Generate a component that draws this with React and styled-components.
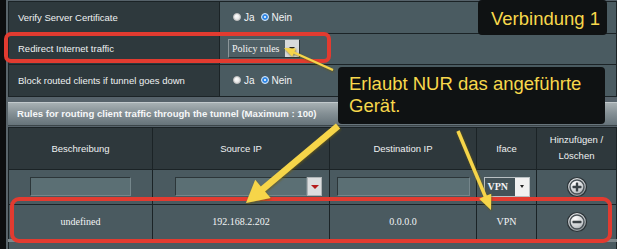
import React from 'react';
import styled, { createGlobalStyle } from 'styled-components';

const GlobalStyle = createGlobalStyle`
    html, body {
        margin: 0;
        padding: 0;
        background: #0e0f10;
    }
    body {
        font-family: "Liberation Sans", Arial, sans-serif;
    }
`;

const settings = [
    { label: 'Verify Server Certificate', type: 'radio' },
    { label: 'Redirect Internet traffic', type: 'select' },
    { label: 'Block routed clients if tunnel goes down', type: 'radio' },
];

const columns = [
    { title: 'Beschreibung', width: 144 },
    { title: 'Source IP', width: 177 },
    { title: 'Destination IP', width: 147 },
    { title: 'Iface', width: 60 },
    { title: ['Hinzufügen /', 'Löschen'] },
];

const rule = ['undefined', '192.168.2.202', '0.0.0.0', 'VPN'];

// arrow polygon from tail to tip
const arrowPoints = (tail, tip, shaft, headLen, headW) => {
    const dx = tip[0] - tail[0];
    const dy = tip[1] - tail[1];
    const len = Math.hypot(dx, dy);
    const ux = dx / len;
    const uy = dy / len;
    const nx = -uy;
    const ny = ux;
    const bx = tip[0] - ux * headLen;
    const by = tip[1] - uy * headLen;
    const pts = [
        [tail[0] + nx * shaft / 2, tail[1] + ny * shaft / 2],
        [bx + nx * shaft / 2, by + ny * shaft / 2],
        [bx + nx * headW / 2, by + ny * headW / 2],
        tip,
        [bx - nx * headW / 2, by - ny * headW / 2],
        [bx - nx * shaft / 2, by - ny * shaft / 2],
        [tail[0] - nx * shaft / 2, tail[1] - ny * shaft / 2],
    ];
    return pts.map(p => p.map(v => v.toFixed(1)).join(',')).join(' ');
};

const Radio = ({ checked, label }) => (
    <RadioLabel>
        <RadioDot checked={checked} />
        {label}
    </RadioLabel>
);

const CircleButton = ({ minus }) => (
    <svg width="22" height="22" viewBox="0 0 22 22">
        <defs>
            <radialGradient id={minus ? 'gm' : 'gp'} cx="40%" cy="30%" r="75%">
                <stop offset="0%" stopColor="#ffffff" />
                <stop offset="60%" stopColor="#c9cdd0" />
                <stop offset="100%" stopColor="#7f878b" />
            </radialGradient>
        </defs>
        <circle cx="11" cy="11" r="9.5" fill={`url(#${minus ? 'gm' : 'gp'})`} stroke="#2a3236" strokeWidth="1.2" />
        <circle cx="11" cy="11" r="7" fill="none" stroke="#4a5257" strokeWidth="1.4" />
        <rect x="6.5" y="9.8" width="9" height="2.4" rx="0.6" fill="#3a4246" />
        {!minus && <rect x="9.8" y="6.5" width="2.4" height="9" rx="0.6" fill="#3a4246" />}
    </svg>
);

const App = () => {
    return (
        <>
            <GlobalStyle />
            <Page>
                <Rail />
                <Main>
                    <SettingsTable>
                        <colgroup>
                            <col style={{ width: 211 }} />
                            <col />
                        </colgroup>
                        <tbody>
                            {settings.map(s => (
                                <tr key={s.label}>
                                    <LabelCell>{s.label}</LabelCell>
                                    <ValueCell>
                                        {s.type === 'radio' ? (
                                            <RadioGroup>
                                                <Radio label="Ja" />
                                                <Radio label="Nein" checked />
                                            </RadioGroup>
                                        ) : (
                                            <Select>
                                                <SelectText>Policy rules</SelectText>
                                                <SelectButton>
                                                    <Caret />
                                                </SelectButton>
                                            </Select>
                                        )}
                                    </ValueCell>
                                </tr>
                            ))}
                        </tbody>
                    </SettingsTable>

                    <SectionHeader>Rules for routing client traffic through the tunnel (Maximum : 100)</SectionHeader>

                    <RulesTable>
                        <colgroup>
                            {columns.map((c, i) => (
                                <col key={i} style={c.width ? { width: c.width } : undefined} />
                            ))}
                        </colgroup>
                        <thead>
                            <tr>
                                {columns.map((c, i) => (
                                    <HeadCell key={i}>
                                        {Array.isArray(c.title)
                                            ? c.title.map(t => <HeadLine key={t}>{t}</HeadLine>)
                                            : c.title}
                                    </HeadCell>
                                ))}
                            </tr>
                        </thead>
                        <tbody>
                            <InputRow>
                                <BodyCell>
                                    <TextInput w={101} />
                                </BodyCell>
                                <BodyCell>
                                    <Combo>
                                        <TextInput w={132} />
                                        <ComboButton>
                                            <Caret red />
                                        </ComboButton>
                                    </Combo>
                                </BodyCell>
                                <BodyCell>
                                    <TextInput w={133} />
                                </BodyCell>
                                <BodyCell>
                                    <IfaceSelect>
                                        <IfaceText>VPN</IfaceText>
                                        <IfaceButton>
                                            <Caret small />
                                        </IfaceButton>
                                    </IfaceSelect>
                                </BodyCell>
                                <BodyCell>
                                    <CircleButton />
                                </BodyCell>
                            </InputRow>
                            <DataRow>
                                {rule.map((v, i) => (
                                    <DataCell key={i}>{v}</DataCell>
                                ))}
                                <BodyCell>
                                    <CircleButton minus />
                                </BodyCell>
                            </DataRow>
                            <TailRow>
                                <BodyCell colSpan={5} />
                            </TailRow>
                        </tbody>
                    </RulesTable>
                </Main>

                <Highlight top={32} left={4} width={327} height={31} radius={7} />
                <Highlight top={197} left={10} width={602} height={46} radius={9} />

                <Callout top={0} left={478} width={129} height={35}>
                    Verbindung 1
                </Callout>
                <Callout top={67} left={338} width={267} height={57} multi>
                    Erlaubt NUR das angeführte
                    <br />
                    Gerät.
                </Callout>

                <ArrowLayer width="617" height="249" viewBox="0 0 617 249">
                    <defs>
                        <filter id="shade" x="-20%" y="-20%" width="140%" height="140%">
                            <feDropShadow dx="0.6" dy="1" stdDeviation="0.8" floodColor="#6b5a10" floodOpacity="0.8" />
                        </filter>
                    </defs>
                    <g fill="#f6d54a" filter="url(#shade)">
                        <polygon points={arrowPoints([333, 70], [284, 48], 2, 11, 9)} />
                        <polygon points={arrowPoints([338, 126], [246, 203], 6.5, 22, 24)} />
                        <polygon points={arrowPoints([458, 131], [491, 210], 3.5, 15, 13)} />
                    </g>
                </ArrowLayer>
            </Page>
        </>
    );
};

export default App;

const Page = styled.div`
    position: relative;
    display: flex;
    width: 617px;
    height: 249px;
    overflow: hidden;
    background: #0e0f10;
`;

const Rail = styled.div`
    width: 6px;
    flex: none;
    background: #0d0e0f;
    border-right: 2px solid #5a656b;
`;

const Main = styled.div`
    flex: 1;
    display: flex;
    flex-direction: column;
    background: #56626a;
    padding-top: 1px;
`;

const SettingsTable = styled.table`
    width: 100%;
    border-collapse: collapse;
    table-layout: fixed;

    td {
        border: 1px solid #1b2326;
        height: 31.5px;
        box-sizing: border-box;
    }
`;

const LabelCell = styled.td`
    background: #2e393d;
    color: #eef1f2;
    font-size: 9.5px;
    padding: 0 0 0 9px;
`;

const ValueCell = styled.td`
    background: #4a5b61;
    padding: 0 0 0 13px;
`;

const RadioGroup = styled.div`
    display: flex;
    align-items: center;
    gap: 6px;
`;

const RadioLabel = styled.label`
    display: flex;
    align-items: center;
    gap: 3px;
    color: #f2f4f5;
    font-size: 10px;
`;

const RadioDot = styled.span`
    width: 8px;
    height: 8px;
    border-radius: 50%;
    box-sizing: border-box;
    background: ${p => (p.checked ? '#2d86e6' : 'radial-gradient(circle at 40% 35%, #ffffff, #d6d6d6)')};
    border: ${p => (p.checked ? '1px solid #d8e8f8' : '1px solid #bdbdbd')};
    box-shadow: ${p => (p.checked ? 'inset 0 0 0 2px #2d86e6, inset 0 0 0 4px #ffffff' : 'none')};
`;

const Select = styled.div`
    display: flex;
    width: 72px;
    height: 19px;
    margin-left: -5px;
    border: 1px solid #8b969a;
    border-right-color: #2a3336;
    border-bottom-color: #2a3336;
    background: #4f5f65;
    box-sizing: border-box;
`;

const SelectText = styled.span`
    flex: 1;
    overflow: hidden;
    font-family: "Liberation Serif", "Times New Roman", serif;
    font-size: 10px;
    color: #f4f4f4;
    line-height: 17px;
    padding-left: 3px;
    white-space: nowrap;
`;

const SelectButton = styled.span`
    width: 14px;
    flex: none;
    background: #d7d9da;
    display: flex;
    align-items: center;
    justify-content: center;
`;

const Caret = styled.span`
    width: 0;
    height: 0;
    border-left: ${p => (p.red ? 4 : p.small ? 2 : 3)}px solid transparent;
    border-right: ${p => (p.red ? 4 : p.small ? 2 : 3)}px solid transparent;
    border-top: ${p => (p.red ? 4 : p.small ? 3 : 3)}px solid ${p => (p.red ? '#b51c1c' : '#222')};
`;

const SectionHeader = styled.div`
    margin-top: 5px;
    height: 22px;
    line-height: 22px;
    padding-left: 9px;
    background: linear-gradient(#a7b0b3, #869196 45%, #66737a);
    border-top: 1px solid #c2c9cc;
    border-bottom: 1px solid #3b4549;
    color: #f6f7f8;
    font-weight: bold;
    font-size: 9.6px;
    white-space: nowrap;
`;

const RulesTable = styled.table`
    width: 100%;
    margin-top: 1px;
    border-collapse: collapse;
    table-layout: fixed;
`;

const HeadCell = styled.th`
    height: 41px;
    padding: 0;
    background: #2e383c;
    border: 1px solid #1b2326;
    color: #eef1f2;
    font-size: 9.5px;
    font-weight: normal;
    text-align: center;
`;

const HeadLine = styled.div`
    line-height: 16px;
`;

const BodyCell = styled.td`
    padding: 0;
    border: 1px solid #1b2326;
    background: #4a5a60;
    text-align: center;
    vertical-align: middle;

    svg {
        display: block;
        margin: 0 auto;
    }
`;

const InputRow = styled.tr`
    height: 35px;
`;

const DataRow = styled.tr`
    height: 36px;
`;

const TailRow = styled.tr`
    height: 30px;

    td {
        border-top: 3px solid #7e888c;
    }
`;

const DataCell = styled(BodyCell)`
    font-family: "Liberation Serif", "Times New Roman", serif;
    font-size: 10px;
    color: #f2f4f5;
`;

const TextInput = styled.div`
    width: ${p => p.w}px;
    height: 19px;
    box-sizing: border-box;
    margin: 0 auto;
    background: #5b6f74;
    border: 1px solid #2c3639;
    border-right-color: #75868b;
    border-bottom-color: #75868b;
`;

const Combo = styled.div`
    display: flex;
    width: 147px;
    margin: 0 0 0 22px;
`;

const ComboButton = styled.div`
    width: 15px;
    height: 19px;
    background: #dcdedf;
    border: 1px solid #aeb3b5;
    box-sizing: border-box;
    display: flex;
    align-items: center;
    justify-content: center;
`;

const IfaceSelect = styled.div`
    display: flex;
    width: 46px;
    height: 20px;
    margin: 0 auto;
    box-sizing: border-box;
    border: 1px solid #b9c0c3;
    background: #435258;
`;

const IfaceText = styled.span`
    flex: 1;
    font-family: "Liberation Serif", "Times New Roman", serif;
    font-weight: bold;
    font-size: 10px;
    line-height: 18px;
    color: #f4f4f4;
    text-align: left;
    padding-left: 3px;
`;

const IfaceButton = styled.span`
    width: 14px;
    background: #f1f1f1;
    display: flex;
    align-items: center;
    justify-content: center;
`;

const Highlight = styled.div`
    position: absolute;
    top: ${p => p.top}px;
    left: ${p => p.left}px;
    width: ${p => p.width}px;
    height: ${p => p.height}px;
    border: 4px solid #e23b30;
    border-radius: ${p => p.radius}px;
    box-sizing: border-box;
    pointer-events: none;
`;

const Callout = styled.div`
    position: absolute;
    top: ${p => p.top}px;
    left: ${p => p.left}px;
    width: ${p => p.width}px;
    height: ${p => p.height}px;
    box-sizing: border-box;
    padding: ${p => (p.multi ? '6px 0 0 11px' : '8px 0 0 13px')};
    background: #0f1213;
    border-radius: 4px;
    color: #f8d84c;
    font-size: 18.5px;
    line-height: 22px;
    white-space: nowrap;
`;

const ArrowLayer = styled.svg`
    position: absolute;
    inset: 0;
    pointer-events: none;
`;
